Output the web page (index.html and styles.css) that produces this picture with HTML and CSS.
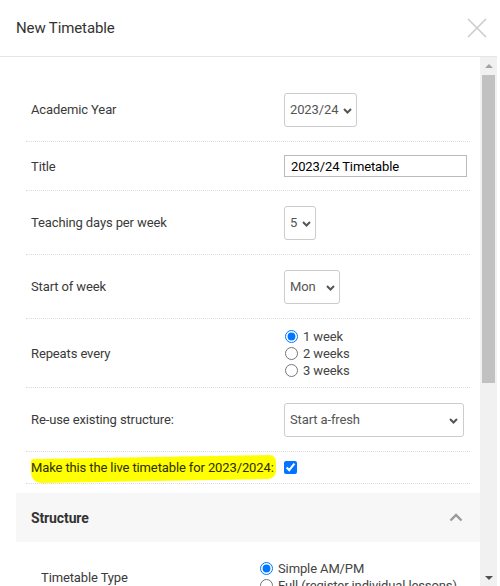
FILE: index.html
```html
<!DOCTYPE html>
<html lang="en">
<head>
    <meta charset="UTF-8">
    <meta name="viewport" content="width=device-width, initial-scale=1.0">
    <title>New Timetable</title>

    <link rel="stylesheet" href="styles.css">
</head>
<body>

    <div class="modal">
        <div class="modal-header">
            <h4 class="modal-title">New Timetable</h4>
            <button class="close" type="button" aria-label="Close">
                <svg width="20" height="20" viewBox="0 0 20 20"><path d="M1 1L19 19M19 1L1 19" stroke="#cccccc" stroke-width="1.6" fill="none"/></svg>
            </button>
        </div>

        <div class="modal-body">
            <div class="scroll-area">

                <div class="form">
                    <div class="row">
                        <label>Academic Year</label>
                        <span class="select select-year">
                            <select><option>2023/24</option></select>
                            <svg class="caret" width="9" height="6" viewBox="0 0 9 6"><path d="M1 1l3.5 3.5L8 1" stroke="#555" stroke-width="2" fill="none"/></svg>
                        </span>
                    </div>

                    <div class="row row-input">
                        <label>Title</label>
                        <input class="text-input" type="text" value="2023/24 Timetable">
                    </div>

                    <div class="row">
                        <label>Teaching days per week</label>
                        <span class="select select-days">
                            <select><option>5</option></select>
                            <svg class="caret" width="9" height="6" viewBox="0 0 9 6"><path d="M1 1l3.5 3.5L8 1" stroke="#555" stroke-width="2" fill="none"/></svg>
                        </span>
                    </div>

                    <div class="row">
                        <label>Start of week</label>
                        <span class="select select-day">
                            <select><option>Mon</option></select>
                            <svg class="caret" width="9" height="6" viewBox="0 0 9 6"><path d="M1 1l3.5 3.5L8 1" stroke="#555" stroke-width="2" fill="none"/></svg>
                        </span>
                    </div>

                    <div class="row row-radios">
                        <label>Repeats every</label>
                        <div class="radio-list">
                            <label><input type="radio" name="repeat" checked> 1 week</label>
                            <label><input type="radio" name="repeat"> 2 weeks</label>
                            <label><input type="radio" name="repeat"> 3 weeks</label>
                        </div>
                    </div>

                    <div class="row">
                        <label>Re-use existing structure:</label>
                        <span class="select select-wide">
                            <select><option>Start a-fresh</option></select>
                            <svg class="caret" width="9" height="6" viewBox="0 0 9 6"><path d="M1 1l3.5 3.5L8 1" stroke="#555" stroke-width="2" fill="none"/></svg>
                        </span>
                    </div>

                    <div class="row row-check">
                        <label><span class="highlight">Make this the live timetable for 2023/2024:</span></label>
                        <input class="check" type="checkbox" checked>
                    </div>
                </div>

                <div class="section-head">
                    <span>Structure</span>
                    <svg width="14" height="9" viewBox="0 0 14 9"><path d="M1.5 7.5L7 2l5.5 5.5" stroke="#999" stroke-width="2.4" fill="none"/></svg>
                </div>

                <div class="section-body">
                    <div class="section-row">
                        <label>Timetable Type</label>
                        <div class="radio-list">
                            <label><input type="radio" name="type" checked> Simple AM/PM</label>
                            <label><input type="radio" name="type"> Full (register individual lessons)</label>
                        </div>
                    </div>
                </div>

            </div>

            <!-- pasek przewijania -->
            <div class="scrollbar">
                <div class="sb-btn"><span class="arrow-up"></span></div>
                <div class="sb-thumb"></div>
                <div class="sb-rest"></div>
                <div class="sb-btn"><span class="arrow-down"></span></div>
            </div>
        </div>
    </div>

</body>
</html>
```

FILE: styles.css
```css
* {
    box-sizing: border-box;
}

body {
    margin: 0;
    padding: 0;
    font-family: Roboto, 'Noto Sans', 'Liberation Sans', sans-serif;
    font-size: 13px;
    letter-spacing: -0.12px;
    color: #333;
    background: #fff;
}

.modal {
    width: 497px;
    height: 586px;
    display: flex;
    flex-direction: column;
    background: #fff;
    overflow: hidden;
}

.modal-header {
    height: 57px;
    flex-shrink: 0;
    display: flex;
    align-items: center;
    justify-content: space-between;
    padding: 0 10px 0 16px;
    border-bottom: 1px solid #e5e5e5;
}

.modal-title {
    margin: 0;
    font-size: 15px;
    font-weight: 400;
    color: #333;
}

.close {
    border: 0;
    background: none;
    padding: 0;
    width: 20px;
    height: 20px;
    display: flex;
}

.modal-body {
    flex: 1;
    display: flex;
    min-height: 0;
}

.scroll-area {
    width: 480px;
    overflow: hidden;
}

.form {
    padding: 21px 10px 0 26px;
}

.row {
    display: grid;
    grid-template-columns: 253px 1fr;
    align-items: center;
    min-height: 64px;
    padding-left: 5px;
    border-bottom: 1px dotted #ddd;
    color: #3a3a3a;
}

.row-input {
    min-height: 49px;
}

.row-radios {
    min-height: 69px;
}

.row-check {
    min-height: 32px;
}

.select {
    position: relative;
    display: inline-block;
    height: 34px;
}

.select select {
    appearance: none;
    -webkit-appearance: none;
    width: 100%;
    height: 34px;
    padding: 0 0 0 5px;
    border: 1px solid #ccc;
    border-radius: 3px;
    background: #fff;
    font-family: inherit;
    font-size: 13px;
    letter-spacing: -0.12px;
    color: #555;
}

.select .caret {
    position: absolute;
    right: 5px;
    top: 15px;
    pointer-events: none;
}

.select-year {
    width: 73px;
}

.select-days {
    width: 32px;
}

.select-day {
    width: 56px;
}

.select-wide {
    width: 180px;
}

.select-wide .caret {
    right: 6px;
}

.text-input {
    width: 183px;
    height: 22px;
    padding: 0 6px;
    border: 1px solid #bbb;
    font-family: inherit;
    font-size: 13px;
    letter-spacing: -0.12px;
    color: #000;
}

.radio-list label {
    display: flex;
    align-items: center;
    height: 17px;
    color: #444;
    white-space: nowrap;
}

.radio-list input {
    width: 13px;
    height: 13px;
    margin: 0 5px 0 1px;
}

.check {
    width: 13px;
    height: 13px;
    margin: 0;
}

.highlight {
    position: relative;
    z-index: 0;
    color: #2e2e00;
}

.highlight::before {
    content: "";
    position: absolute;
    left: 0;
    right: -2px;
    top: -3px;
    bottom: -6px;
    background: #ffff00;
    border-radius: 3px 6px 8px 10px;
    transform: rotate(-1deg);
    z-index: -1;
}

.section-head {
    margin: 9px 0 0 16px;
    height: 49px;
    display: flex;
    align-items: center;
    justify-content: space-between;
    padding: 0 17px 0 15px;
    background: #f7f7f7;
    font-size: 14px;
    font-weight: bold;
    color: #333;
}

.section-body {
    padding: 18px 0 0 41px;
}

.section-row {
    display: grid;
    grid-template-columns: 218px 1fr;
    align-items: center;
    color: #3a3a3a;
}

.scrollbar {
    width: 17px;
    flex-shrink: 0;
    display: flex;
    flex-direction: column;
    align-items: center;
    background: #f1f1f1;
}

.sb-btn {
    width: 100%;
    height: 17px;
    display: flex;
    align-items: center;
    justify-content: center;
}

.sb-thumb {
    width: 13px;
    height: 308px;
    margin-top: 1px;
    background: #c1c1c1;
}

.sb-rest {
    flex: 1;
}

.arrow-up {
    width: 0;
    height: 0;
    border-left: 4px solid transparent;
    border-right: 4px solid transparent;
    border-bottom: 4px solid #a3a3a3;
}

.arrow-down {
    width: 0;
    height: 0;
    border-left: 4px solid transparent;
    border-right: 4px solid transparent;
    border-top: 4px solid #505050;
}
```
